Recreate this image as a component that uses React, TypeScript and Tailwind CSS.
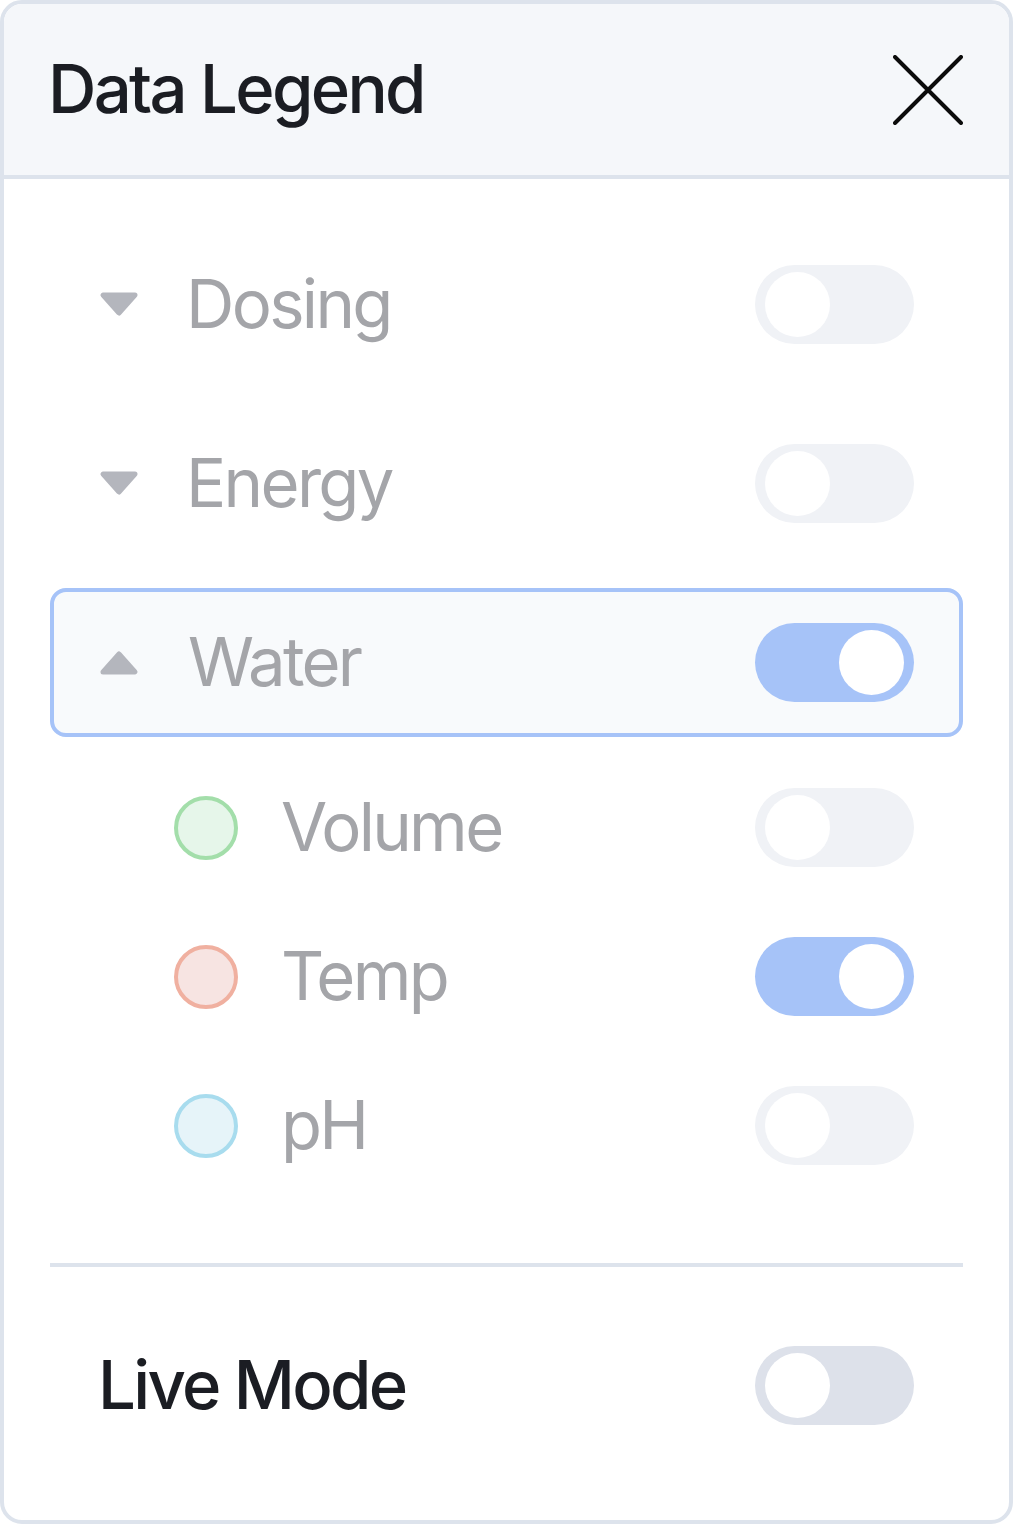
import React from "react";

type Item = { label: string; on: boolean };

const FONT = { fontFamily: "Inter, 'Noto Sans', sans-serif" };

function Toggle({ on, tone = "light" }: { on: boolean; tone?: "light" | "dark" }) {
  const track = on ? "bg-[#a6c3f8] justify-end" : tone === "dark" ? "bg-[#dde1ea] justify-start" : "bg-[#f0f2f6] justify-start";
  return (
    <div className={`flex h-[79px] w-[159px] shrink-0 items-center rounded-full px-[10px] ${track}`}>
      <div className="h-[65px] w-[65px] rounded-full bg-white" />
    </div>
  );
}

function Caret({ up }: { up?: boolean }) {
  return (
    <svg width="40" height="25" viewBox="0 0 40 25" className="shrink-0">
      <path
        d={up ? "M4 22 L20 4 L36 22 Z" : "M4 3 L36 3 L20 21 Z"}
        fill="#b4b6bd"
        stroke="#b4b6bd"
        strokeWidth="5"
        strokeLinejoin="round"
      />
    </svg>
  );
}

function Dot({ border, fill }: { border: string; fill: string }) {
  return <div className={`h-[64px] w-[64px] shrink-0 rounded-full border-[4px] ${border} ${fill}`} />;
}

const groups: Item[] = [
  { label: "Dosing", on: false },
  { label: "Energy", on: false },
];

const metrics = [
  { label: "Volume", on: false, border: "border-[#a3deaa]", fill: "bg-[#e6f6ea]" },
  { label: "Temp", on: true, border: "border-[#f0b0a0]", fill: "bg-[#f7e4e2]" },
  { label: "pH", on: false, border: "border-[#a8dcee]", fill: "bg-[#e6f4f9]" },
];

export default function App() {
  return (
    <div className="min-h-screen bg-white" style={FONT}>
      <div className="flex h-[1524px] w-[1013px] flex-col overflow-hidden rounded-[22px] border-[4px] border-[#dde3ec] bg-white">
        <div className="flex h-[175px] shrink-0 items-center justify-between border-b-[4px] border-[#dde3ec] bg-[#f5f7fa] pl-[44px] pr-[46px]">
          <h1 className="text-[67px] font-medium tracking-[-0.04em] text-[#1b1d23]">Data Legend</h1>
          <svg width="70" height="70" viewBox="0 0 70 70">
            <path d="M2 2 L68 68 M68 2 L2 68" stroke="#0b0b0b" strokeWidth="4" strokeLinecap="round" />
          </svg>
        </div>

        <div className="flex flex-col px-[46px] pt-[51px]">
          {groups.map((g) => (
            <div key={g.label} className="mb-[30px] flex h-[149px] items-center pl-[49px] pr-[49px]">
              <Caret />
              <span className="ml-[47px] flex-1 text-[67px] tracking-[-0.04em] text-[#a4a5a9]">{g.label}</span>
              <Toggle on={g.on} />
            </div>
          ))}

          <div className="flex h-[149px] items-center rounded-[16px] border-[4px] border-[#a6c3f8] bg-[#f8fafc] pl-[45px] pr-[45px]">
            <Caret up />
            <span className="ml-[49px] flex-1 text-[67px] tracking-[-0.04em] text-[#a4a5a9]">Water</span>
            <Toggle on />
          </div>

          <div className="mt-[16px] flex flex-col">
            {metrics.map((m) => (
              <div key={m.label} className="flex h-[149px] items-center pl-[124px] pr-[49px]">
                <Dot border={m.border} fill={m.fill} />
                <span className="ml-[43px] flex-1 text-[67px] tracking-[-0.04em] text-[#a4a5a9]">{m.label}</span>
                <Toggle on={m.on} />
              </div>
            ))}
          </div>

          <div className="mt-[63px] h-[4px] bg-[#dde3ec]" />

          <div className="mt-[44px] flex h-[149px] items-center pl-[48px] pr-[49px]">
            <span className="flex-1 text-[67px] font-medium tracking-[-0.04em] text-[#1b1d23]">Live Mode</span>
            <Toggle on={false} tone="dark" />
          </div>
        </div>
      </div>
    </div>
  );
}
